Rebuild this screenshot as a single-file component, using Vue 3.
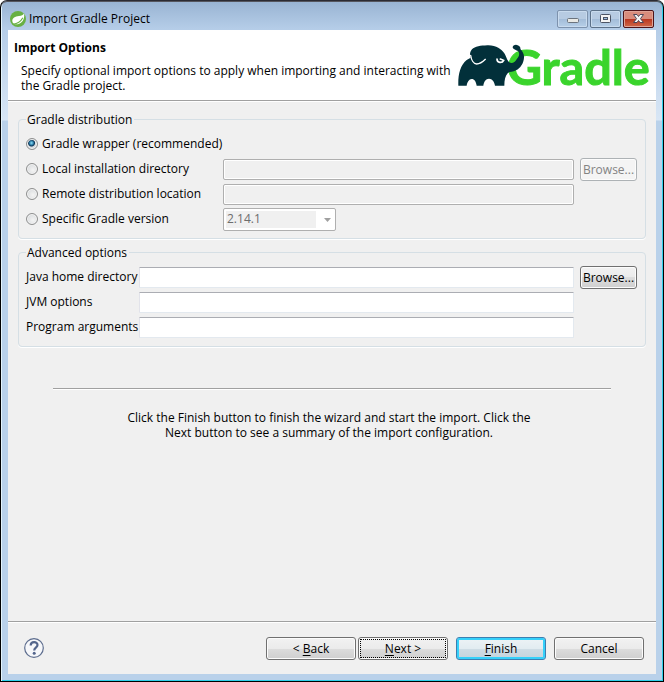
<script setup>
import { ref } from 'vue'

const distribution = ref('wrapper')
const localDir = ref('')
const remoteUrl = ref('')
const version = ref('2.14.1')
const javaHome = ref('')
const jvmOptions = ref('')
const programArgs = ref('')
</script>

<template>
  <main class="window">
    <header class="titlebar">
      <svg class="app-icon" viewBox="0 0 16 16" aria-hidden="true">
        <circle cx="8" cy="8" r="8" fill="#68b043" />
        <path d="M14 2.2C13.2 4 11.500 4.600 9 4.900C5 5.400 2.200 6.800 2.300 10C2.400 13.200 6 14.100 9.200 12.800C13.200 11.200 14.900 6.500 14 2.200Z" fill="#fff" />
        <path d="M3 13.200C7 12.800 10.800 10.600 12.800 6.800" fill="none" stroke="#68b043" stroke-width="1.100" />
      </svg>
      <span class="title">Import Gradle Project</span>
      <div class="captions">
        <button class="caption" type="button" aria-label="Minimize">
          <svg viewBox="0 0 30 16"><rect x="9.500" y="7.500" width="11" height="4" rx="1" fill="#e8e8e4" stroke="#6b737d" /></svg>
        </button>
        <button class="caption strong" type="button" aria-label="Maximize">
          <svg viewBox="0 0 30 16"><rect x="9.500" y="3.500" width="10" height="8" rx="1" fill="#f4f4f4" stroke="#4c5465" /><rect x="12.500" y="6.500" width="4" height="2" fill="#9dbce0" stroke="#4c5465" /></svg>
        </button>
        <button class="caption close" type="button" aria-label="Close">
          <svg viewBox="0 0 30 16"><path d="M9.500 3.500h3.500l1.500 2 1.500-2h3.500l-3 4.200 3 3.800H16l-1.500-2-1.500 2H9.500l3-3.800z" fill="#f4f4f4" stroke="#4c4658" stroke-linejoin="round" /></svg>
        </button>
      </div>
    </header>

    <div class="client">
      <section class="banner">
        <div class="banner-text">
          <h1>Import Options</h1>
          <p>Specify optional import options to apply when importing and interacting with the Gradle project.</p>
        </div>
        <svg class="logo" viewBox="51 129 591 135" role="img" aria-label="Gradle">
          <text x="200" y="256" class="logo-text">Gradle</text>
          <path fill="#02303a" d="M55 257C54 225 60 196 80 180L92 173C88 166 90 155 96 148C105 139 122 137 142 136C168 135 184 147 193 160C199 169 201 182 208 187C216 192 225 187 230 178C235 171 239 166 237 158C235 151 226 152 219 145C216 139 221 134 228 134C236 135 243 141 241 147C247 153 253 162 252 173C251 190 241 204 228 211C218 217 209 214 203 220C196 228 193 240 193 257H165C163 245 157 236 147 236C137 236 132 245 130 257H110C108 245 103 237 95 237C87 237 82 246 80 257Z" />
          <path fill="none" stroke="#fff" stroke-width="4" stroke-linecap="round" d="M92 166C94 180 101 192 110 192C120 192 129 185 136 178" />
          <path fill="none" stroke="#fff" stroke-width="5" stroke-linecap="round" d="M171 177C171 190 187 190 191 181L181 177" />
        </svg>
      </section>

      <form class="body" @submit.prevent>
        <fieldset>
          <legend>Gradle distribution</legend>
          <div class="grid distribution">
            <label class="choice wide"><input v-model="distribution" type="radio" name="dist" value="wrapper" />Gradle wrapper (recommended)</label>

            <label class="choice"><input v-model="distribution" type="radio" name="dist" value="local" />Local installation directory</label>
            <input v-model="localDir" class="field" type="text" aria-label="Local installation directory path" :disabled="distribution !== 'local'" />
            <button class="btn" type="button" :disabled="distribution !== 'local'">Browse...</button>

            <label class="choice"><input v-model="distribution" type="radio" name="dist" value="remote" />Remote distribution location</label>
            <input v-model="remoteUrl" class="field" type="text" aria-label="Remote distribution location URL" :disabled="distribution !== 'remote'" />
            <span></span>

            <label class="choice"><input v-model="distribution" type="radio" name="dist" value="version" />Specific Gradle version</label>
            <div class="combo">
              <select v-model="version" aria-label="Gradle version" :disabled="distribution !== 'version'">
                <option>2.14.1</option>
              </select>
              <svg viewBox="0 0 7 4" aria-hidden="true"><path d="M0 0h7L3.500 4z" fill="#a0a0a0" /></svg>
            </div>
          </div>
        </fieldset>

        <fieldset>
          <legend>Advanced options</legend>
          <div class="grid advanced">
            <label for="java-home">Java home directory</label>
            <input id="java-home" v-model="javaHome" class="field" type="text" />
            <button class="btn" type="button">Browse...</button>

            <label for="jvm">JVM options</label>
            <input id="jvm" v-model="jvmOptions" class="field" type="text" />
            <span></span>

            <label for="args">Program arguments</label>
            <input id="args" v-model="programArgs" class="field" type="text" />
            <span></span>
          </div>
        </fieldset>

        <hr />
        <p class="hint">Click the Finish button to finish the wizard and start the import. Click the Next button to see a summary of the import configuration.</p>
      </form>

      <footer class="footer">
        <button class="help" type="button" aria-label="Help">
          <svg viewBox="0 0 20 20">
            <circle cx="10" cy="10" r="9.300" fill="#f6f7fa" stroke="#5d6d8e" stroke-width="1.200" />
            <path d="M6.700 7.500C6.700 3.100 13.500 3.200 13.500 7C13.500 9.700 10.200 9.600 10.200 12.400" fill="none" stroke="#53658c" stroke-width="2.200" />
            <circle cx="10.200" cy="15.300" r="1.500" fill="#53658c" />
          </svg>
        </button>
        <div class="nav">
          <button class="btn" type="button">&lt; <u>B</u>ack</button>
          <button class="btn focused" type="button"><u>N</u>ext &gt;</button>
        </div>
        <button class="btn primary" type="button"><u>F</u>inish</button>
        <button class="btn" type="button">Cancel</button>
      </footer>
    </div>
  </main>
</template>

<style>
body {
  background: #fff;
}
</style>

<style scoped>
.window,
.window * {
  box-sizing: border-box;
}
.window {
  display: flex;
  flex-direction: column;
  min-height: 100vh;
  padding: 1px 6px 5px;
  border: 1px solid #000;
  border-top: 1px solid #2b2b33;
  border-radius: 7px 7px 0 0;
  box-shadow: inset 0 1px #55565e, inset 1px 0 #e4f4fc, inset 0 -1px #2fd0ea, inset -1px 0 #2fd0ea;
  background: linear-gradient(#98b3d2, #b5cde8 28px, #d8e6f5 119px, #b9d1ea 120px);
  font: 12px/15px "Open Sans", "Noto Sans", sans-serif;
  color: #000;
}
button,
input,
select {
  font: inherit;
  color: inherit;
  margin: 0;
}
.titlebar {
  display: flex;
  align-items: center;
  height: 28px;
  padding: 5px 3px 0;
}
.app-icon {
  width: 16px;
  height: 16px;
}
.title {
  flex: 1;
  padding-left: 3px;
}
.captions {
  display: flex;
  gap: 2px;
}
.caption {
  width: 31px;
  height: 18px;
  padding: 0;
  border: 1px solid #7d92ad;
  border-radius: 2px;
  box-shadow: inset 0 0 0 1px #c9dbee;
  background: linear-gradient(#b7cbe2 50%, #a3bcd8 50%, #b7cfe8);
}
.caption svg {
  display: block;
  width: 30px;
  height: 16px;
}
.caption.strong {
  border-color: #5c7189;
}
.caption.close {
  border-color: #4e1318;
  box-shadow: inset 0 0 0 1px #dfa396;
  background: linear-gradient(#d98c7c 50%, #b9351f 50%, #cf6849);
}
.client {
  flex: 1;
  display: flex;
  flex-direction: column;
  margin: 0 1px 2px;
  background: #f0f0f0;
}
.banner {
  display: flex;
  justify-content: space-between;
  height: 71px;
  padding: 10px 2px 0 6px;
  background: #fff;
  border-bottom: 1px solid #a0a0a0;
}
.banner-text {
  flex: 1;
}
h1 {
  margin: 0;
  font-size: 12px;
  line-height: 15px;
}
.banner p {
  margin: 8px 0 0 7px;
}
.logo {
  flex: none;
  width: 197px;
  height: 45px;
  margin-top: 3px;
  overflow: visible;
}
.logo-text {
  font: 700 146px Lato, sans-serif;
  fill: #3ad42c;
  stroke: #3ad42c;
  stroke-width: 3px;
}
.body {
  flex: 1;
  padding: 10px 10px 0;
  border-top: 1px solid #fff;
}
fieldset {
  min-width: 0;
  margin: 0 0 6px;
  padding: 5px 8px 6px 7px;
  border: 1px solid #d5dfe5;
  border-radius: 4px;
  box-shadow: 0 1px #fff;
}
legend {
  padding: 0 2px 0 1px;
  height: 15px;
}
.grid {
  display: grid;
  grid-auto-rows: 25px;
  align-items: center;
}
.grid label {
  padding-bottom: 2px;
}
.distribution {
  grid-template-columns: 197px 1fr 63px;
}
.advanced {
  grid-template-columns: 113px 1fr 63px;
}
.wide {
  grid-column: 1 / -1;
}
.choice {
  display: flex;
  align-items: center;
  gap: 4px;
}
.choice input {
  appearance: none;
  width: 12px;
  height: 12px;
  border: 1px solid #8e8f8f;
  border-radius: 50%;
  background: radial-gradient(circle at 60% 60%, #f4f4f4, #cfd3d6);
  box-shadow: inset 0 0 0 1px #f4f4f4;
}
.choice input:checked {
  background: radial-gradient(circle at 45% 40%, #8fe0f8 0, #2c7da8 2px, #0b3454 3px, #d5dade 4px);
}
.field {
  width: 100%;
  height: 21px;
  padding: 0 3px;
  border: 1px solid #e3e9ef;
  border-top-color: #abadb3;
  border-left-color: #e2e3ea;
  border-radius: 1px;
  background: #fff;
}
.field:disabled {
  border-color: #afafaf;
  border-radius: 2px;
  background: #f0f0f0;
  box-shadow: inset 0 0 0 1px #fff;
}
.btn {
  height: 23px;
  padding: 0;
  border: 1px solid #707070;
  border-radius: 3px;
  box-shadow: inset 0 0 0 1px #fcfcfc;
  background: linear-gradient(#f2f2f2, #ebebeb 50%, #dddddd 50%, #cfcfcf);
}
.grid .btn {
  margin-left: 6px;
}
.btn:disabled {
  border-color: #adb2b5;
  background: #f4f4f4;
  color: #838383;
}
.combo {
  position: relative;
  width: 113px;
  height: 23px;
}
.combo select {
  appearance: none;
  display: block;
  width: 100%;
  height: 23px;
  padding: 0 20px 2px 3px;
  border: 1px solid #afafaf;
  border-radius: 2px;
  background: #fff;
}
.combo select:disabled {
  color: #6d6d6d;
  opacity: 1;
  background: linear-gradient(#f0f0f0, #f0f0f0) 2px 2px / 90px 17px no-repeat #fff;
}
.combo svg {
  position: absolute;
  right: 5px;
  top: 10px;
  width: 7px;
  height: 4px;
}
hr {
  height: 2px;
  margin: 41px 35px 0;
  border: 0;
  border-top: 1px solid #a0a0a0;
  border-bottom: 1px solid #fff;
}
.hint {
  max-width: 420px;
  margin: 20px auto 0;
  padding-right: 6px;
  text-align: center;
}
.footer {
  display: flex;
  align-items: center;
  gap: 8px;
  height: 53px;
  padding: 0 12px 0 16px;
  border-top: 1px solid #a0a0a0;
  box-shadow: inset 0 1px #fff;
}
.footer .btn {
  width: 90px;
}
.footer .primary {
  border-color: #3c7fb1;
  box-shadow: inset 0 0 0 2px #35d0fa;
  background: linear-gradient(#edf3f6, #e2ecf1 50%, #cfdde5 50%, #c4d3dc);
}
.btn.focused {
  outline: 1px dotted #000;
  outline-offset: -3px;
}
.nav {
  display: flex;
  gap: 2px;
}
.help {
  width: 20px;
  height: 20px;
  margin-right: auto;
  padding: 0;
  border: 0;
  background: none;
}
.help svg {
  display: block;
}
u {
  text-underline-offset: 2px;
}
</style>
